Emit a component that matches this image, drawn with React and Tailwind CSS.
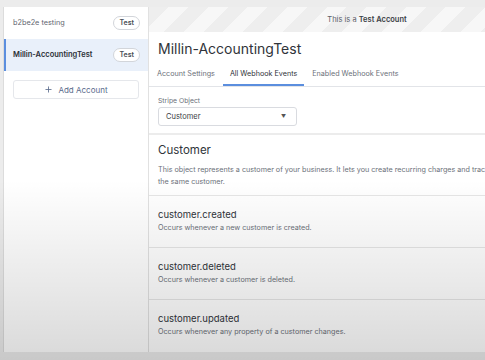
import { Plus } from "lucide-react";

const events = [
  { name: "customer.created", desc: "Occurs whenever a new customer is created." },
  { name: "customer.deleted", desc: "Occurs whenever a customer is deleted." },
  { name: "customer.updated", desc: "Occurs whenever any property of a customer changes." },
];

const accounts = [
  { name: "b2be2e testing", active: false },
  { name: "Millin-AccountingTest", active: true },
];

const App = () => {
  return (
    <div
      className="relative w-[485px] h-[360px] overflow-hidden bg-[#ececec] pt-[7px] pl-[3px]"
      style={{ fontFamily: "Inter, 'Liberation Sans', sans-serif" }}
    >
      <div className="flex h-[345px] bg-white border-l border-[#dcdcdc]">
        {/* sidebar */}
        <div className="w-[145px] flex flex-col border-r border-[#e1e1e1]">
          {accounts.map((a) => (
            <div
              key={a.name}
              className={`h-[32px] flex items-center justify-between pl-[7px] pr-[8px] border-l-2 ${
                a.active ? "bg-[#e9f0fa] border-[#5b8ede]" : "border-transparent"
              }`}
            >
              <span
                className={`${a.active ? "text-[7.5px] font-semibold text-[#2b2f36]" : "text-[7.3px] text-[#5f6670]"}`}
              >
                {a.name}
              </span>
              <span className="text-[7px] font-semibold text-[#4a4f57] bg-white border border-[#d2d5da] rounded-full px-[5px] h-[14px] flex items-center">
                Test
              </span>
            </div>
          ))}
          <div className="mx-[9px] mt-[9px] h-[19px] border border-[#e5e7eb] rounded-[3px] flex items-center justify-center gap-[5px] text-[8px] text-[#5a6b8c]">
            <Plus size={9} strokeWidth={2.2} />
            <span>Add Account</span>
          </div>
        </div>

        {/* main */}
        <div className="flex-1 flex flex-col min-w-0">
          <div className="h-[25px] shrink-0 flex items-center justify-center text-[7.5px] text-[#5d6169] bg-[repeating-linear-gradient(135deg,#eeeeee_0px,#eeeeee_14px,#f7f7f7_14px,#f7f7f7_28px)] pl-[100px]">
            <span>
              This is a <b className="font-semibold text-[#3a3e45]">Test Account</b>
            </span>
          </div>
          <div className="pl-[9px] pt-[8px] text-[14px] leading-[17px] text-[#30343a] h-[33px] shrink-0">
            Millin-AccountingTest
          </div>
          <div className="flex h-[22px] shrink-0 items-stretch gap-[8px] pl-[8px] border-b border-[#e2e4e8] text-[7.2px] text-[#6b7079]">
            <div className="flex items-center pb-[3px]">Account Settings</div>
            <div className="flex items-center pb-[1px] px-[7px] border-b-2 border-[#5b8ede] text-[#2f333a]">
              All Webhook Events
            </div>
            <div className="flex items-center pb-[3px]">Enabled Webhook Events</div>
          </div>
          <div className="pl-[9px] pt-[10px] pb-[7px] border-b-2 border-[#ececec] shrink-0">
            <div className="text-[6.8px] leading-[8px] text-[#6b7079] mb-[2px]">Stripe Object</div>
            <div className="w-[139px] h-[19px] border border-[#d9dbe0] rounded-[3px] flex items-center justify-between pl-[7px] pr-[10px] text-[7.5px] text-[#3a3e45]">
              <span>Customer</span>
              <span className="text-[5px] text-[#555]">▼</span>
            </div>
          </div>
          <div className="pl-[9px] pt-[8px] pb-[7px] border-b border-[#e6e6e6] shrink-0">
            <div className="text-[11.5px] text-[#30343a] leading-[14px]">Customer</div>
            <div className="text-[7.2px] text-[#6b7079] leading-[12px] mt-[7px] whitespace-nowrap">
              This object represents a customer of your business. It lets you create recurring charges and track payments that belong to
              <br />
              the same customer.
            </div>
          </div>
          {events.map((e, i) => (
            <div
              key={e.name}
              className={`pl-[9px] h-[52px] shrink-0 pt-[12px] ${
                i < events.length - 1 ? "border-b border-[#e6e6e6]" : ""
              }`}
            >
              <div className="text-[9.5px] text-[#30343a] leading-[14px]">{e.name}</div>
              <div className="text-[7.2px] text-[#6b7079] leading-[12px]">{e.desc}</div>
            </div>
          ))}
        </div>
      </div>
      <div className="pointer-events-none absolute inset-0 bg-[linear-gradient(to_bottom,rgba(0,0,0,0)_0%,rgba(0,0,0,0)_50%,rgba(0,0,0,0.15)_100%)]" />
    </div>
  );
};

export default App;
